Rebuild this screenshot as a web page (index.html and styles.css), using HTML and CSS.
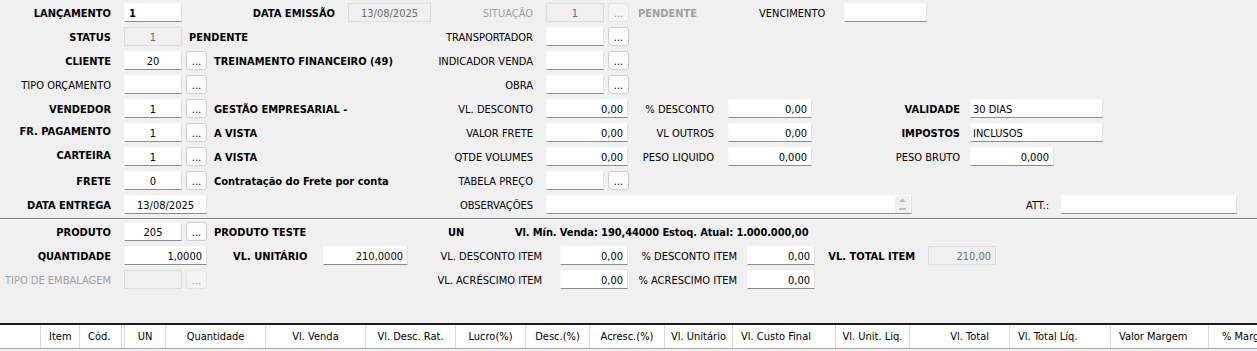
FILE: index.html
```html
<!DOCTYPE html>
<html lang="pt-br">
<head>
    <meta charset="UTF-8">
    <title>Orçamento</title>
    <link rel="stylesheet" href="styles.css">
</head>
<body>

    <!-- Dados do orçamento -->
    <div class="secao topo">
        <div class="linha">
            <div class="bloco esq">
                <label class="rot neg">LANÇAMENTO</label>
                <input class="campo w58 neg" value="1">
                <label class="rot neg emissao">DATA EMISSÃO</label>
                <input class="campo w83 centro" value="13/08/2025" disabled>
            </div>
            <div class="bloco meio">
                <label class="rot cinza">SITUAÇÃO</label>
                <input class="campo w58 centro" value="1" disabled>
                <button class="reticencias" disabled>...</button>
            </div>
            <div class="bloco">
                <span class="pendente">PENDENTE</span>
                <span class="vencimento">VENCIMENTO</span>
                <input class="campo w83">
            </div>
        </div>

        <div class="linha">
            <div class="bloco esq">
                <label class="rot neg">STATUS</label>
                <input class="campo w58 centro" value="1" disabled>
                <span class="desc">PENDENTE</span>
            </div>
            <div class="bloco meio">
                <label class="rot">TRANSPORTADOR</label>
                <input class="campo w58">
                <button class="reticencias">...</button>
            </div>
        </div>

        <div class="linha">
            <div class="bloco esq">
                <label class="rot neg">CLIENTE</label>
                <input class="campo w58 centro" value="20">
                <button class="reticencias">...</button>
                <span class="desc">TREINAMENTO FINANCEIRO (49)</span>
            </div>
            <div class="bloco meio">
                <label class="rot">INDICADOR VENDA</label>
                <input class="campo w58">
                <button class="reticencias">...</button>
            </div>
        </div>

        <div class="linha">
            <div class="bloco esq">
                <label class="rot">TIPO ORÇAMENTO</label>
                <input class="campo w58">
                <button class="reticencias">...</button>
            </div>
            <div class="bloco meio">
                <label class="rot">OBRA</label>
                <input class="campo w58">
                <button class="reticencias">...</button>
            </div>
        </div>

        <div class="linha">
            <div class="bloco esq">
                <label class="rot neg">VENDEDOR</label>
                <input class="campo w58 centro" value="1">
                <button class="reticencias">...</button>
                <span class="desc">GESTÃO EMPRESARIAL -</span>
            </div>
            <div class="bloco meio">
                <label class="rot">VL. DESCONTO</label>
                <input class="campo w82 dir" value="0,00">
            </div>
            <div class="bloco pct">
                <label class="rot">% DESCONTO</label>
                <input class="campo w84 dir" value="0,00">
            </div>
            <div class="bloco fim">
                <label class="rot neg">VALIDADE</label>
                <input class="campo w133 texto" value="30 DIAS">
            </div>
        </div>

        <div class="linha">
            <div class="bloco esq">
                <label class="rot neg subir">FR. PAGAMENTO</label>
                <input class="campo w58 centro" value="1">
                <button class="reticencias">...</button>
                <span class="desc">A VISTA</span>
            </div>
            <div class="bloco meio">
                <label class="rot">VALOR FRETE</label>
                <input class="campo w82 dir" value="0,00">
            </div>
            <div class="bloco pct">
                <label class="rot">VL OUTROS</label>
                <input class="campo w84 dir" value="0,00">
            </div>
            <div class="bloco fim">
                <label class="rot neg">IMPOSTOS</label>
                <input class="campo w133 texto" value="INCLUSOS">
            </div>
        </div>

        <div class="linha">
            <div class="bloco esq">
                <label class="rot neg subir">CARTEIRA</label>
                <input class="campo w58 centro" value="1">
                <button class="reticencias">...</button>
                <span class="desc">A VISTA</span>
            </div>
            <div class="bloco meio">
                <label class="rot">QTDE VOLUMES</label>
                <input class="campo w82 dir" value="0,00">
            </div>
            <div class="bloco pct">
                <label class="rot">PESO LIQUIDO</label>
                <input class="campo w84 dir" value="0,000">
            </div>
            <div class="bloco fim">
                <label class="rot">PESO BRUTO</label>
                <input class="campo w84 dir" value="0,000">
            </div>
        </div>

        <div class="linha">
            <div class="bloco esq">
                <label class="rot neg">FRETE</label>
                <input class="campo w58 centro" value="0">
                <button class="reticencias">...</button>
                <span class="desc">Contratação do Frete por conta</span>
            </div>
            <div class="bloco meio">
                <label class="rot">TABELA PREÇO</label>
                <input class="campo w58">
                <button class="reticencias">...</button>
            </div>
        </div>

        <div class="linha">
            <div class="bloco esq">
                <label class="rot neg">DATA ENTREGA</label>
                <input class="campo w83 centro" value="13/08/2025">
            </div>
            <div class="bloco">
                <label class="rot obs">OBSERVAÇÕES</label>
                <div class="memo">
                    <svg class="rolagem" width="15" height="17" viewBox="0 0 15 17">
                        <path d="M4 6 L7.5 2.5 L11 6 Z" fill="#bdbdbd"/>
                        <rect x="4" y="12" width="7" height="2" fill="#bdbdbd"/>
                    </svg>
                </div>
                <label class="rot att">ATT.:</label>
                <input class="campo w176">
            </div>
        </div>
    </div>

    <div class="divisor"></div>

    <!-- Item do orçamento -->
    <div class="secao produto">
        <div class="linha">
            <div class="bloco esq">
                <label class="rot neg">PRODUTO</label>
                <input class="campo w58 centro" value="205">
                <button class="reticencias">...</button>
                <span class="desc">PRODUTO TESTE</span>
            </div>
            <span class="un">UN</span>
            <span class="info-estoque">Vl. Mín. Venda: 190,44000 Estoq. Atual: 1.000.000,00</span>
        </div>

        <div class="linha">
            <div class="bloco esq">
                <label class="rot neg">QUANTIDADE</label>
                <input class="campo w83 dir" value="1,0000">
                <label class="neg unitario">VL. UNITÁRIO</label>
                <input class="campo w85 dir" value="210,0000">
            </div>
            <div class="bloco item">
                <label class="rot">VL. DESCONTO ITEM</label>
                <input class="campo w68 dir" value="0,00">
            </div>
            <div class="bloco item-pct">
                <label class="rot">% DESCONTO ITEM</label>
                <input class="campo w68 dir" value="0,00">
            </div>
            <div class="bloco total">
                <label class="rot neg">VL. TOTAL ITEM</label>
                <input class="campo w68 dir" value="210,00" disabled>
            </div>
        </div>

        <div class="linha">
            <div class="bloco esq">
                <label class="rot cinza">TIPO DE EMBALAGEM</label>
                <input class="campo w58" disabled>
                <button class="reticencias" disabled>...</button>
            </div>
            <div class="bloco item">
                <label class="rot">VL. ACRÉSCIMO ITEM</label>
                <input class="campo w68 dir" value="0,00">
            </div>
            <div class="bloco item-pct">
                <label class="rot">% ACRESCIMO ITEM</label>
                <input class="campo w68 dir" value="0,00">
            </div>
        </div>
    </div>

    <!-- Grade de itens -->
    <div class="grade">
        <div class="col c41"></div>
        <div class="col c39 a-esq">Item</div>
        <div class="col c42 a-esq">Cód.</div>
        <div class="col c3"></div>
        <div class="col c41">UN</div>
        <div class="col c100">Quantidade</div>
        <div class="col c100">Vl. Venda</div>
        <div class="col c90">Vl. Desc. Rat.</div>
        <div class="col c70">Lucro(%)</div>
        <div class="col c64">Desc.(%)</div>
        <div class="col c75">Acresc.(%)</div>
        <div class="col c68">Vl. Unitário</div>
        <div class="col c103 a-esq">Vl. Custo Final</div>
        <div class="col c74">Vl. Unit. Liq.</div>
        <div class="col c100 a-dir">Vl. Total</div>
        <div class="col c101 a-esq">Vl. Total Líq.</div>
        <div class="col c98 a-esq">Valor Margem</div>
        <div class="col c90 a-esq ultima">% Margem</div>
    </div>

</body>
</html>
```

FILE: styles.css
```css
/* Base da tela, no estilo de formulário desktop */
body {
    margin: 0;
    width: 1257px;
    height: 351px;
    overflow: hidden;
    background-color: #f0f0f0;
    font-family: "DejaVu Sans Condensed", "DejaVu Sans", sans-serif;
    font-stretch: condensed;
    font-size: 11px;
    color: #000;
}

.secao {
    display: flex;
    flex-direction: column;
    gap: 5px;
}

.topo {
    padding-top: 3px;
}

.produto {
    padding-top: 2px;
}

.divisor {
    margin-top: 4px;
    border-top: 1px solid #7c7c7c;
    border-bottom: 1px solid #fff;
}

.linha {
    display: flex;
    align-items: center;
    height: 19px;
    white-space: nowrap;
}

.bloco {
    display: flex;
    align-items: center;
    flex: none;
}

/* Textos soltos ficam 1px abaixo do centro, como no original */
.rot,
.desc,
.pendente,
.vencimento,
.unitario,
.un,
.info-estoque {
    position: relative;
    top: 1px;
}

/* Colunas do formulário */
.esq { width: 431px; }
.meio { width: 199px; }
.pct { width: 182px; }
.item { width: 197px; }
.item-pct { width: 187px; }

/* Rótulos alinhados à direita */
.rot {
    flex: none;
    text-align: right;
    margin-right: 13px;
}

.esq .rot { width: 111px; }
.meio .rot { width: 102px; }
.pct .rot { width: 84px; margin-right: 14px; }
.fim .rot { width: 148px; margin-right: 10px; }
.item .rot { width: 111px; margin-right: 18px; }
.item-pct .rot { width: 109px; margin-right: 10px; }
.total .rot { width: 100px; }

.esq .emissao { width: 153px; }
.obs { width: 102px; }
.att { width: 137px; margin-right: 12px; }

.neg { font-weight: bold; }
.cinza { color: #a0a0a0; }
.rot.subir { top: -1px; }

.desc {
    margin-left: 7px;
    font-weight: bold;
}

.pendente {
    width: 121px;
    margin-left: 8px;
    font-weight: bold;
    color: #a0a0a0;
}

.vencimento {
    width: 85px;
}

.unitario {
    margin-left: 26px;
    margin-right: 11px;
    width: 79px;
}

.un {
    margin-left: 17px;
    width: 67px;
    font-weight: bold;
}

.info-estoque {
    font-weight: bold;
    letter-spacing: -0.1px;
}

/* Campos de edição */
.campo {
    flex: none;
    box-sizing: border-box;
    height: 19px;
    margin: 0;
    padding: 1px 4px 0;
    font: inherit;
    color: #000;
    background-color: #fff;
    border: 1px solid;
    border-color: #fbfbfb #e2e2e2 #8c8c8c #fbfbfb;
    border-radius: 0;
    outline: none;
}

.campo.neg { font-weight: bold; }

.campo:disabled {
    background-color: #f0f0f0;
    border-color: #dddddd;
    color: #6d6d6d;
}

.centro { text-align: center; }
.dir { text-align: right; }
.texto { padding-left: 2px; }

.w58 { width: 58px; }
.w68 { width: 68px; }
.w82 { width: 82px; }
.w83 { width: 83px; }
.w84 { width: 84px; }
.w85 { width: 85px; }
.w133 { width: 133px; }
.w176 { width: 176px; }

/* Botão de pesquisa "..." */
.reticencias {
    flex: none;
    box-sizing: border-box;
    width: 21px;
    height: 19px;
    margin-left: 4px;
    padding: 0 0 2px;
    display: flex;
    align-items: flex-end;
    justify-content: center;
    font: inherit;
    line-height: 1;
    color: #000;
    background-color: #fdfdfd;
    border: 1px solid #cfcfcf;
    border-radius: 3px;
}

.reticencias:disabled {
    background-color: #f4f4f4;
    border-color: #e4e4e4;
    color: #9a9a9a;
}

/* Campo de observações com barra de rolagem */
.memo {
    box-sizing: border-box;
    width: 366px;
    height: 19px;
    display: flex;
    justify-content: flex-end;
    align-items: center;
    background-color: #fff;
    border: 1px solid;
    border-color: #fbfbfb #e2e2e2 #8c8c8c #fbfbfb;
}

.rolagem {
    background-color: #f0f0f0;
    margin-right: 1px;
}

/* Cabeçalho da grade */
.grade {
    display: flex;
    margin-top: 34px;
    height: 23px;
    background-color: #fff;
    border-top: 2px solid #1c1c1c;
    border-bottom: 1px solid #a7a7a7;
    white-space: nowrap;
    overflow: hidden;
}

.col {
    flex: none;
    box-sizing: border-box;
    display: flex;
    align-items: center;
    justify-content: center;
    border-right: 1px solid #dadada;
}

.a-esq { justify-content: flex-start; padding-left: 8px; }
.a-dir { justify-content: flex-end; padding-right: 20px; }
.ultima { padding-left: 13px; border-right: none; }

.c3 { width: 3px; }
.c39 { width: 39px; }
.c41 { width: 41px; }
.c42 { width: 42px; }
.c64 { width: 64px; }
.c68 { width: 68px; }
.c70 { width: 70px; }
.c74 { width: 74px; }
.c75 { width: 75px; }
.c90 { width: 90px; }
.c98 { width: 98px; }
.c100 { width: 100px; }
.c101 { width: 101px; }
.c103 { width: 103px; }
```
